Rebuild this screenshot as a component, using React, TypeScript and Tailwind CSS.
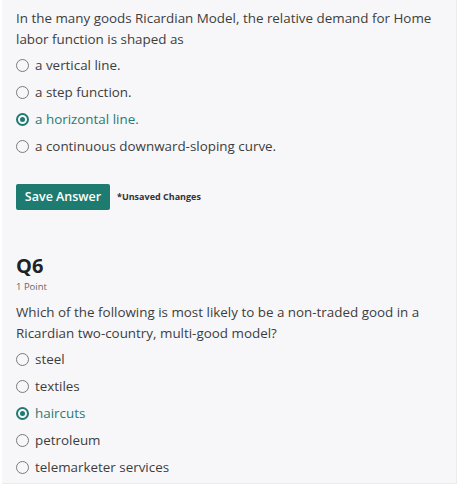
import React from "react";

const Radio = ({ checked }: { checked?: boolean }) =>
  checked ? (
    <span className="flex h-[13px] w-[13px] shrink-0 items-center justify-center rounded-full border-2 border-[#1f7a70]">
      <span className="h-[5px] w-[5px] rounded-full bg-[#1f7a70]" />
    </span>
  ) : (
    <span className="h-[13px] w-[13px] shrink-0 rounded-full border-[1.5px] border-[#7a7a7a]" />
  );

const Option = ({ label, checked }: { label: string; checked?: boolean }) => (
  <div className="flex h-[27px] items-center gap-[6px]">
    <Radio checked={checked} />
    <span className={checked ? "text-[#2b7a72]" : "text-[#3d3d3d]"}>{label}</span>
  </div>
);

export default function App() {
  return (
    <div className="h-[489px] w-[474px] bg-white" style={{ fontFamily: "'Open Sans', Lato, sans-serif" }}>
      <div className="ml-[2px] h-[484px] w-[455px] border-r border-b border-[#ececef] bg-[#f7f7f9] pl-[14px] pt-[8px] text-[13.4px] text-[#3d3d3d]">
        <p className="leading-[21px]">
          In the many goods Ricardian Model, the relative demand for Home
          <br />
          labor function is shaped as
        </p>
        <div className="mt-[2px] flex flex-col">
          <Option label="a vertical line." />
          <Option label="a step function." />
          <Option label="a horizontal line." checked />
          <Option label="a continuous downward-sloping curve." />
        </div>
        <div className="mt-[24px] flex items-center gap-[7px]">
          <button className="h-[26px] w-[94px] rounded-[2px] bg-[#1e7b70] text-[12.5px] font-semibold text-white">
            Save Answer
          </button>
          <span className="text-[9px] font-bold text-[#333]">*Unsaved Changes</span>
        </div>
        <div className="mt-[45px] text-[20px] font-bold leading-[22px] text-[#222]">Q6</div>
        <div className="mt-[3px] text-[9.5px] leading-[13px] text-[#666]">1 Point</div>
        <p className="mt-[9px] leading-[21px]">
          Which of the following is most likely to be a non-traded good in a
          <br />
          Ricardian two-country, multi-good model?
        </p>
        <div className="mt-[2px] flex flex-col">
          <Option label="steel" />
          <Option label="textiles" />
          <Option label="haircuts" checked />
          <Option label="petroleum" />
          <Option label="telemarketer services" />
        </div>
      </div>
    </div>
  );
}
